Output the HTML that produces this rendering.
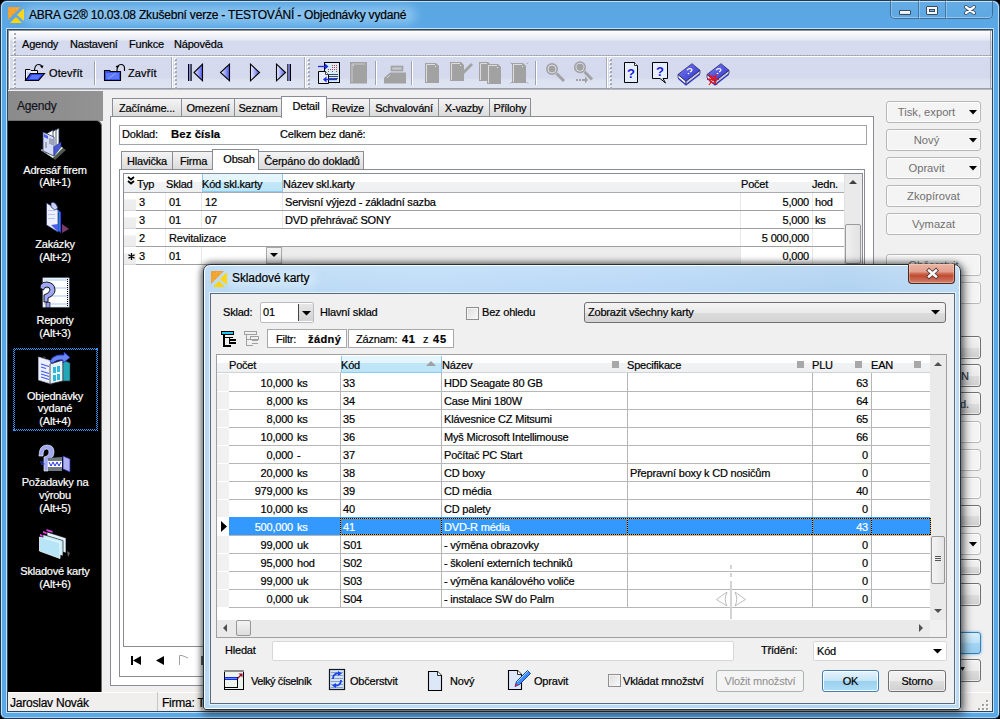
<!DOCTYPE html><html><head><meta charset="utf-8"><style>
html,body{margin:0;padding:0;width:1000px;height:719px;overflow:hidden;background:#000;}
.t{position:absolute;white-space:nowrap;letter-spacing:-0.2px;-webkit-text-stroke:0.2px currentColor;font-family:"Liberation Sans",sans-serif;line-height:normal;}
.r{position:absolute;box-sizing:border-box;}
svg.r{overflow:visible}
</style></head><body>
<div class="r" style="left:0px;top:0px;width:1000px;height:719px;background:linear-gradient(#5aa6e2,#5ba8e6 30px,#5aa8e6);border:1px solid #1f3650;border-radius:7px 7px 6px 6px;"></div>
<div class="r" style="left:1px;top:1px;width:998px;height:717px;border:1px solid #bde0fb;border-radius:6px 6px 5px 5px;border-bottom-color:#a8d2f4"></div>
<div class="r" style="left:6px;top:28px;width:988px;height:685px;border:1px solid #c2e2fb;"></div>
<div class="r" style="left:7px;top:29px;width:986px;height:683px;border:1px solid #2a4560;background:#f0f0f0;"></div>
<div class="r" style="left:890px;top:-1px;width:103px;height:20px;border:1px solid rgba(40,60,90,.55);border-top:none;border-radius:0 0 5px 5px;background:linear-gradient(rgba(255,255,255,.08),rgba(255,255,255,.02));box-shadow:inset 0 -1px 0 rgba(255,255,255,.35), inset 1px 0 0 rgba(255,255,255,.25)"></div>
<div class="r" style="left:918px;top:0px;width:1px;height:19px;background:rgba(40,60,90,.45)"></div>
<div class="r" style="left:919px;top:0px;width:1px;height:19px;background:rgba(255,255,255,.25)"></div>
<div class="r" style="left:945px;top:0px;width:1px;height:19px;background:rgba(40,60,90,.45)"></div>
<div class="r" style="left:946px;top:0px;width:1px;height:19px;background:rgba(255,255,255,.25)"></div>
<div class="r" style="left:899px;top:10px;width:12px;height:5px;background:linear-gradient(#fff,#dfe6ee);border:1px solid #3b4a5a;border-radius:1px"></div>
<div class="r" style="left:926px;top:6px;width:12px;height:9px;border:1px solid #3b4a5a;background:#f4f7fa;border-radius:1px"></div>
<div class="r" style="left:929px;top:9px;width:6px;height:3px;background:#7fb5e6;border:1px solid #3b4a5a"></div>
<svg class="r" style="left:964px;top:5px" width="12" height="10" viewBox="0 0 12 10"><path d="M2 2 L10 8 M10 2 L2 8" stroke="#3b4a5a" stroke-width="4" stroke-linecap="round"/><path d="M2 2 L10 8 M10 2 L2 8" stroke="#fafcfe" stroke-width="2.2" stroke-linecap="round"/></svg>
<svg class="r" style="left:8px;top:7px" width="17" height="17" viewBox="0 0 17 17"><polygon points="0,0 13,0 0,13" fill="#f0a030"/><polygon points="15,2 16,2 16,14 9,8" fill="#ffd400"/><polygon points="2,16 8,10 14,16" fill="#ffd400"/><g fill="#ffd040" opacity=".7"><circle cx="3" cy="3" r=".7"/><circle cx="6" cy="2" r=".7"/><circle cx="2" cy="6" r=".7"/><circle cx="5" cy="5" r=".7"/><circle cx="9" cy="2" r=".7"/><circle cx="2" cy="9" r=".7"/></g></svg>
<div class="r" style="left:24px;top:7px;width:392px;height:16px;background:rgba(200,232,255,.45);filter:blur(5px);border-radius:8px"></div>
<div class="t" style="left:29px;top:8px;font-size:12px;color:#000;font-weight:normal;letter-spacing:-0.2px">ABRA G2® 10.03.08 Zkušební verze - TESTOVÁNÍ - Objednávky vydané</div>
<div class="r" style="left:8px;top:30px;width:984px;height:25px;background:linear-gradient(#ffffff,#f7f8fc 3px,#e6e9f4 10px,#d5daee 11px,#d5daee);"></div>
<div class="r" style="left:8px;top:55px;width:984px;height:1px;background:repeating-linear-gradient(90deg,#9fa3ad 0 2px,#b8bbc4 2px 3px)"></div>
<div class="r" style="left:8px;top:56px;width:984px;height:1px;background:#fbfcfe"></div>
<div class="r" style="left:8px;top:57px;width:984px;height:31px;background:linear-gradient(#d5daee,#d4d9ed 21px,#dde2f2 23px,#dfe4f3);"></div>
<div class="r" style="left:8px;top:88px;width:984px;height:2px;background:linear-gradient(#8e929b,#c4c7ce)"></div>
<div class="r" style="left:8px;top:30px;width:984px;height:60px;border-left:1px solid #8d939c;border-top:1px solid #8d939c"></div>
<div class="r" style="left:9px;top:31px;width:982px;height:58px;border-left:1px solid #fff;border-top:1px solid #fff"></div>
<div class="r" style="left:14px;top:33px;width:2px;height:2px;background:#a9abb2;box-shadow:-1px -1px 0 #fff"></div>
<div class="r" style="left:14px;top:37px;width:2px;height:2px;background:#a9abb2;box-shadow:-1px -1px 0 #fff"></div>
<div class="r" style="left:14px;top:41px;width:2px;height:2px;background:#a9abb2;box-shadow:-1px -1px 0 #fff"></div>
<div class="r" style="left:14px;top:45px;width:2px;height:2px;background:#a9abb2;box-shadow:-1px -1px 0 #fff"></div>
<div class="r" style="left:14px;top:49px;width:2px;height:2px;background:#a9abb2;box-shadow:-1px -1px 0 #fff"></div>
<div class="r" style="left:14px;top:53px;width:2px;height:2px;background:#a9abb2;box-shadow:-1px -1px 0 #fff"></div>
<div class="r" style="left:14px;top:59px;width:2px;height:2px;background:#a9abb2;box-shadow:-1px -1px 0 #fff"></div>
<div class="r" style="left:14px;top:63px;width:2px;height:2px;background:#a9abb2;box-shadow:-1px -1px 0 #fff"></div>
<div class="r" style="left:14px;top:67px;width:2px;height:2px;background:#a9abb2;box-shadow:-1px -1px 0 #fff"></div>
<div class="r" style="left:14px;top:71px;width:2px;height:2px;background:#a9abb2;box-shadow:-1px -1px 0 #fff"></div>
<div class="r" style="left:14px;top:75px;width:2px;height:2px;background:#a9abb2;box-shadow:-1px -1px 0 #fff"></div>
<div class="r" style="left:14px;top:79px;width:2px;height:2px;background:#a9abb2;box-shadow:-1px -1px 0 #fff"></div>
<div class="r" style="left:14px;top:83px;width:2px;height:2px;background:#a9abb2;box-shadow:-1px -1px 0 #fff"></div>
<div class="r" style="left:14px;top:87px;width:2px;height:2px;background:#a9abb2;box-shadow:-1px -1px 0 #fff"></div>
<div class="t" style="left:22px;top:38px;font-size:11px;color:#000;font-weight:normal;">Agendy</div>
<div class="t" style="left:70px;top:38px;font-size:11px;color:#000;font-weight:normal;">Nastavení</div>
<div class="t" style="left:129px;top:38px;font-size:11px;color:#000;font-weight:normal;">Funkce</div>
<div class="t" style="left:174px;top:38px;font-size:11px;color:#000;font-weight:normal;">Nápověda</div>
<div class="r" style="left:94px;top:61px;width:1px;height:24px;background:#9fa3ad"></div>
<div class="r" style="left:95px;top:61px;width:1px;height:24px;background:#fff"></div>
<div class="r" style="left:171px;top:57px;width:1px;height:31px;background:#a9adb7"></div>
<div class="r" style="left:172px;top:57px;width:1px;height:31px;background:#fff"></div>
<div class="r" style="left:175px;top:59px;width:2px;height:2px;background:#a9abb2;box-shadow:-1px -1px 0 #fff"></div>
<div class="r" style="left:175px;top:63px;width:2px;height:2px;background:#a9abb2;box-shadow:-1px -1px 0 #fff"></div>
<div class="r" style="left:175px;top:67px;width:2px;height:2px;background:#a9abb2;box-shadow:-1px -1px 0 #fff"></div>
<div class="r" style="left:175px;top:71px;width:2px;height:2px;background:#a9abb2;box-shadow:-1px -1px 0 #fff"></div>
<div class="r" style="left:175px;top:75px;width:2px;height:2px;background:#a9abb2;box-shadow:-1px -1px 0 #fff"></div>
<div class="r" style="left:175px;top:79px;width:2px;height:2px;background:#a9abb2;box-shadow:-1px -1px 0 #fff"></div>
<div class="r" style="left:175px;top:83px;width:2px;height:2px;background:#a9abb2;box-shadow:-1px -1px 0 #fff"></div>
<div class="r" style="left:175px;top:87px;width:2px;height:2px;background:#a9abb2;box-shadow:-1px -1px 0 #fff"></div>
<div class="r" style="left:304px;top:57px;width:1px;height:31px;background:#a9adb7"></div>
<div class="r" style="left:305px;top:57px;width:1px;height:31px;background:#fff"></div>
<div class="r" style="left:308px;top:59px;width:2px;height:2px;background:#a9abb2;box-shadow:-1px -1px 0 #fff"></div>
<div class="r" style="left:308px;top:63px;width:2px;height:2px;background:#a9abb2;box-shadow:-1px -1px 0 #fff"></div>
<div class="r" style="left:308px;top:67px;width:2px;height:2px;background:#a9abb2;box-shadow:-1px -1px 0 #fff"></div>
<div class="r" style="left:308px;top:71px;width:2px;height:2px;background:#a9abb2;box-shadow:-1px -1px 0 #fff"></div>
<div class="r" style="left:308px;top:75px;width:2px;height:2px;background:#a9abb2;box-shadow:-1px -1px 0 #fff"></div>
<div class="r" style="left:308px;top:79px;width:2px;height:2px;background:#a9abb2;box-shadow:-1px -1px 0 #fff"></div>
<div class="r" style="left:308px;top:83px;width:2px;height:2px;background:#a9abb2;box-shadow:-1px -1px 0 #fff"></div>
<div class="r" style="left:308px;top:87px;width:2px;height:2px;background:#a9abb2;box-shadow:-1px -1px 0 #fff"></div>
<div class="r" style="left:375px;top:61px;width:1px;height:24px;background:#9fa3ad"></div>
<div class="r" style="left:376px;top:61px;width:1px;height:24px;background:#fff"></div>
<div class="r" style="left:411px;top:61px;width:1px;height:24px;background:#9fa3ad"></div>
<div class="r" style="left:412px;top:61px;width:1px;height:24px;background:#fff"></div>
<div class="r" style="left:535px;top:61px;width:1px;height:24px;background:#9fa3ad"></div>
<div class="r" style="left:536px;top:61px;width:1px;height:24px;background:#fff"></div>
<div class="r" style="left:606px;top:57px;width:1px;height:31px;background:#a9adb7"></div>
<div class="r" style="left:607px;top:57px;width:1px;height:31px;background:#fff"></div>
<div class="r" style="left:610px;top:59px;width:2px;height:2px;background:#a9abb2;box-shadow:-1px -1px 0 #fff"></div>
<div class="r" style="left:610px;top:63px;width:2px;height:2px;background:#a9abb2;box-shadow:-1px -1px 0 #fff"></div>
<div class="r" style="left:610px;top:67px;width:2px;height:2px;background:#a9abb2;box-shadow:-1px -1px 0 #fff"></div>
<div class="r" style="left:610px;top:71px;width:2px;height:2px;background:#a9abb2;box-shadow:-1px -1px 0 #fff"></div>
<div class="r" style="left:610px;top:75px;width:2px;height:2px;background:#a9abb2;box-shadow:-1px -1px 0 #fff"></div>
<div class="r" style="left:610px;top:79px;width:2px;height:2px;background:#a9abb2;box-shadow:-1px -1px 0 #fff"></div>
<div class="r" style="left:610px;top:83px;width:2px;height:2px;background:#a9abb2;box-shadow:-1px -1px 0 #fff"></div>
<div class="r" style="left:610px;top:87px;width:2px;height:2px;background:#a9abb2;box-shadow:-1px -1px 0 #fff"></div>
<div class="r" style="left:990px;top:57px;width:1px;height:31px;background:#a9adb7"></div>
<div class="r" style="left:990px;top:31px;width:1px;height:24px;background:#a9adb7"></div>
<svg class="r" style="left:24px;top:61px" width="23" height="22" viewBox="24 61 23 22"><path d="M25.5 80.5 L25.5 69.5 L30 69.5 L31 70.5 L37.5 70.5 L37.5 80.5Z" fill="#f0f0ff" stroke="#000" stroke-width="1"/><path d="M27 71 L27 78 L34 74Z" fill="#c8d0f8"/><path d="M25.5 80.5 L30.5 73.5 L44.5 73.5 L38.5 80.5Z" fill="#2a44ec" stroke="#000" stroke-width="1.1"/><path d="M29 79 L32 75 L41 75 L38 79Z" fill="#5a74f4"/><path d="M34.5 70 Q35 64.5 38.5 64.5 Q41.5 64.5 42 67" fill="none" stroke="#000" stroke-width="1.1"/><path d="M40 66 L42.3 68.5 L43.5 65.5Z" fill="#000"/></svg>
<div class="t" style="left:49px;top:67px;font-size:11px;color:#000;font-weight:normal;letter-spacing:0.1px">Otevřít</div>
<svg class="r" style="left:103px;top:61px" width="23" height="22" viewBox="103 61 23 22"><path d="M104.5 80.5 L104.5 70.5 L109.5 70.5 L110.5 71.5 L120.5 71.5 L120.5 80.5Z" fill="#3850ee" stroke="#000" stroke-width="1.1"/><path d="M106 73 L119 73 L119 79 L106 79Z" fill="#5c78f6"/><path d="M108 79 L116 73" stroke="#90a4ff" stroke-width="1"/><path d="M117 71 Q117 64.5 121 64.5 Q124.5 64.5 124.5 68.5 L124.5 71" fill="none" stroke="#000" stroke-width="1.1"/><path d="M115.5 66 L117.5 68.5 L119.5 65.5Z" fill="#000"/></svg>
<div class="t" style="left:128px;top:67px;font-size:11px;color:#000;font-weight:normal;letter-spacing:0.1px">Zavřít</div>
<svg class="r" style="left:187px;top:63px" width="18" height="19" viewBox="0 0 18 19"><defs><linearGradient id="g1" x1="0" x2="1" y1="0" y2="0"><stop offset="0" stop-color="#f4f4ff"/><stop offset="1" stop-color="#4a56e8"/></linearGradient></defs><rect x="1" y="1" width="1.2" height="17" fill="#000"/><rect x="2.2" y="1" width="1.3" height="17" fill="#7b7ef0"/><rect x="3.5" y="1" width="1.2" height="17" fill="#000"/><path d="M15.5 1.2 L7 9.5 L15.5 17.8Z" fill="url(#g1)" stroke="#000" stroke-width="1.1" stroke-linejoin="miter"/></svg>
<svg class="r" style="left:218px;top:63px" width="13" height="19" viewBox="0 0 13 19"><defs><linearGradient id="g2" x1="0" x2="1" y1="0" y2="0"><stop offset="0" stop-color="#f4f4ff"/><stop offset="1" stop-color="#4a56e8"/></linearGradient></defs><path d="M11.5 1.2 L2.5 9.5 L11.5 17.8Z" fill="url(#g2)" stroke="#000" stroke-width="1.1"/></svg>
<svg class="r" style="left:249px;top:63px" width="13" height="19" viewBox="0 0 13 19"><defs><linearGradient id="g3" x1="0" x2="1" y1="0" y2="0"><stop offset="0" stop-color="#f4f4ff"/><stop offset="1" stop-color="#4a56e8"/></linearGradient></defs><path d="M1.5 1.2 L10.5 9.5 L1.5 17.8Z" fill="url(#g3)" stroke="#000" stroke-width="1.1"/></svg>
<svg class="r" style="left:275px;top:63px" width="18" height="19" viewBox="0 0 18 19"><defs><linearGradient id="g4" x1="0" x2="1" y1="0" y2="0"><stop offset="0" stop-color="#f4f4ff"/><stop offset="1" stop-color="#4a56e8"/></linearGradient></defs><path d="M1.5 1.2 L10.5 9.5 L1.5 17.8Z" fill="url(#g4)" stroke="#000" stroke-width="1.1"/><rect x="12.3" y="1" width="1.2" height="17" fill="#000"/><rect x="13.5" y="1" width="1.3" height="17" fill="#7b7ef0"/><rect x="14.8" y="1" width="1.2" height="17" fill="#000"/></svg>
<svg class="r" style="left:317px;top:61px" width="25" height="24" viewBox="317 61 25 24"><rect x="324.5" y="62.5" width="15" height="20" fill="#d4eefc" stroke="#000"/><g fill="#c04040"><rect x="332" y="65" width="1" height="1"/><rect x="334" y="65" width="1" height="1"/><rect x="336" y="65" width="1" height="1"/><rect x="332" y="67" width="1" height="1"/><rect x="334" y="67" width="1" height="1"/><rect x="336" y="67" width="1" height="1"/><rect x="328" y="69" width="1" height="1"/><rect x="330" y="69" width="1" height="1"/><rect x="332" y="69" width="1" height="1"/><rect x="334" y="69" width="1" height="1"/><rect x="336" y="69" width="1" height="1"/><rect x="328" y="71" width="1" height="1"/><rect x="332" y="71" width="1" height="1"/><rect x="336" y="71" width="1" height="1"/></g><g fill="#405060"><rect x="329" y="74" width="9" height="1"/><rect x="329" y="76" width="9" height="1"/><rect x="329" y="78" width="9" height="1"/></g><path d="M318.5 71.5 L325.5 71.5 L328.5 74.5 L328.5 83.5 L318.5 83.5Z" fill="#e8ecfc" stroke="#000"/><path d="M325.5 71.5 L325.5 74.5 L328.5 74.5" fill="#fff" stroke="#000" stroke-width=".7"/><path d="M318 66.5 L326 66.5" stroke="#1a2ae8" stroke-width="1.3"/><path d="M325 63.5 L328.5 66.5 L325 69.5Z" fill="#1a2ae8"/><path d="M337 79.5 L325 79.5" stroke="#1a2ae8" stroke-width="1.3"/><path d="M326.5 76.5 L323 79.5 L326.5 82.5Z" fill="#1a2ae8"/></svg>
<svg class="r" style="left:349px;top:61px" width="20" height="24" viewBox="349 61 20 24"><rect x="350" y="62" width="17" height="21.5" fill="#a2a2a2"/><path d="M352 82 L352 64 L365 64" fill="none" stroke="#d0d0d0" stroke-width=".9"/><rect x="353" y="65" width="1" height="1" fill="#e0e0e0"/></svg>
<svg class="r" style="left:382px;top:64px" width="26" height="21" viewBox="382 64 26 21"><rect x="391.5" y="66.5" width="11" height="4" fill="#c8c8c8" stroke="#a2a2a2" stroke-width="1.6"/><path d="M390 72.5 L406 72.5 L406 83.5 L384 83.5 L384 78Z" fill="#a2a2a2"/><path d="M387 78 L390 75" stroke="#d0d0d0" stroke-width="1"/></svg>
<svg class="r" style="left:425px;top:63px" width="15" height="21" viewBox="0 0 15 21"><path d="M0 0 L11 0 L14 3 L14 20 L0 20Z" fill="#a2a2a2"/><path d="M1.5 19 L1.5 1.5 L10 1.5" fill="none" stroke="#dcdcdc" stroke-width="1"/><rect x="10" y="3" width="1" height="1" fill="#e8e8e8"/></svg>
<svg class="r" style="left:450px;top:62px" width="23" height="21" viewBox="0 0 23 21"><path d="M0 0 L11 0 L14 3 L14 19 L0 19Z" fill="#a2a2a2"/><path d="M1.5 18 L1.5 1.5 L10 1.5" fill="none" stroke="#dcdcdc" stroke-width="1"/><rect x="10" y="3" width="1" height="1" fill="#e8e8e8"/><path d="M13 9 L21 1 L23 3 L13 13Z" fill="#a2a2a2"/></svg>
<svg class="r" style="left:479px;top:62px" width="23" height="23" viewBox="0 0 23 23"><path d="M0 0 L9 0 L12 3 L12 19 L0 19Z" fill="#a2a2a2"/><path d="M1.5 18 L1.5 1.5 L8 1.5" fill="none" stroke="#dcdcdc" stroke-width="1"/><rect x="8" y="3" width="1" height="1" fill="#e8e8e8"/><path d="M8 2 L19 2 L22 5 L22 22 L8 22Z" fill="#a2a2a2"/><path d="M9.5 21 L9.5 3.5 L18 3.5" fill="none" stroke="#dcdcdc" stroke-width="1"/><rect x="18" y="5" width="1" height="1" fill="#e8e8e8"/></svg>
<svg class="r" style="left:510px;top:62px" width="19" height="22" viewBox="0 0 19 22"><path d="M2 1 L13 1 L16 4 L16 21 L2 21Z" fill="#a2a2a2"/><path d="M3.5 20 L3.5 2.5 L12 2.5" fill="none" stroke="#dcdcdc" stroke-width="1"/><rect x="12" y="4" width="1" height="1" fill="#e8e8e8"/><path d="M0.5 0.5 L2 2 M18 0.5 L16.5 2 M0.5 21.5 L2 20 M18 21.5 L16.5 20" stroke="#909090" stroke-width=".8"/></svg>
<svg class="r" style="left:540px;top:58px" width="30" height="30" viewBox="0 0 30 30"><circle cx="12" cy="11" r="5" fill="#a2a2a2" stroke="#a2a2a2" stroke-width="2"/><circle cx="12" cy="11" r="4" fill="none" stroke="#dadde8" stroke-width="1"/><path d="M16.5 15.5 L24 23" stroke="#a2a2a2" stroke-width="3"/></svg>
<svg class="r" style="left:568px;top:58px" width="30" height="30" viewBox="0 0 30 30"><circle cx="12" cy="9.3" r="5" fill="#a2a2a2" stroke="#a2a2a2" stroke-width="2"/><circle cx="12" cy="9.3" r="4" fill="none" stroke="#dadde8" stroke-width="1"/><path d="M16.5 13.8 L24 21.5" stroke="#a2a2a2" stroke-width="3"/><rect x="8" y="21" width="2" height="2" fill="#a2a2a2"/><rect x="11" y="21" width="2" height="2" fill="#a2a2a2"/><rect x="14" y="21" width="4" height="2" fill="#a2a2a2"/><path d="M17 18.5 L20 22 L17 25.5Z" fill="#a2a2a2"/></svg>
<svg class="r" style="left:624px;top:62px" width="15" height="22" viewBox="0 0 15 22"><path d="M0.5 0.5 L10.5 0.5 L13.5 3.5 L13.5 20.5 L0.5 20.5Z" fill="#e6eefc" stroke="#000"/><path d="M10.5 0.5 L10.5 3.5 L13.5 3.5" fill="#fff" stroke="#000" stroke-width=".8"/><text x="7" y="16" font-family="Liberation Sans" font-weight="bold" font-size="13" fill="#1a1ae6" text-anchor="middle">?</text></svg>
<svg class="r" style="left:652px;top:62px" width="17" height="23" viewBox="0 0 17 23"><path d="M0.5 0.5 L15.5 0.5 L15.5 16.5 L11 16.5 L13.5 21 L8 16.5 L0.5 16.5Z" fill="#e6eefc" stroke="#000"/><text x="8" y="13.5" font-family="Liberation Sans" font-weight="bold" font-size="13" fill="#1a1ae6" text-anchor="middle">?</text></svg>
<svg class="r" style="left:677px;top:61px" width="25" height="30" viewBox="0 0 25 30"><g transform="translate(0,1) scale(1,0.83)"><defs><linearGradient id="bk" x1="0" y1="0" x2="1" y2="1"><stop offset="0" stop-color="#7c80f4"/><stop offset="1" stop-color="#2a2ec8"/></linearGradient></defs><path d="M1 15 L9 23 L9 27 L1 19Z" fill="#f0f0f0" stroke="#202060" stroke-width=".8"/><path d="M9 23 L23 10 L23 14 L9 27Z" fill="#c8c8d8" stroke="#202060" stroke-width=".8"/><path d="M9 27 L23 14 L23 15.5 L9 28.5Z" fill="#2030d0"/><path d="M1 19 L9 27 L9 28.5 L1 20.5Z" fill="#2030d0"/><path d="M1 15 L15 2 L23 10 L9 23Z" fill="url(#bk)" stroke="#202060" stroke-width=".8"/><path d="M10 10 Q12 7 14.5 8.5 Q16 10 13 12" fill="none" stroke="#fff" stroke-width="1.3"/><circle cx="11.5" cy="14" r=".9" fill="#fff"/></g></svg>
<svg class="r" style="left:706px;top:61px" width="25" height="30" viewBox="0 0 25 30"><g transform="translate(0,1) scale(1,0.83)"><defs><linearGradient id="bk2" x1="0" y1="0" x2="1" y2="1"><stop offset="0" stop-color="#7c80f4"/><stop offset="1" stop-color="#2a2ec8"/></linearGradient></defs><path d="M1 15 L9 23 L9 27 L1 19Z" fill="#f0f0f0" stroke="#202060" stroke-width=".8"/><path d="M9 23 L23 10 L23 14 L9 27Z" fill="#c8c8d8" stroke="#202060" stroke-width=".8"/><path d="M9 27 L23 14 L23 15.5 L9 28.5Z" fill="#2030d0"/><path d="M1 19 L9 27 L9 28.5 L1 20.5Z" fill="#2030d0"/><path d="M1 15 L15 2 L23 10 L9 23Z" fill="url(#bk2)" stroke="#202060" stroke-width=".8"/><path d="M10 10 Q12 7 14.5 8.5 Q16 10 13 12" fill="none" stroke="#fff" stroke-width="1.3"/><circle cx="11.5" cy="14" r=".9" fill="#fff"/></g><path d="M3 13 L11 24 M11 13 L3 24 M1 18.5 L13 18.5" stroke="#f01010" stroke-width="1.2"/><circle cx="7" cy="18.5" r="3.5" fill="none" stroke="#f01010" stroke-width="1"/></svg>
<div class="r" style="left:8px;top:91px;width:95px;height:30px;background:linear-gradient(90deg,#8b8b8b,#8f8f8f 60%,#939393);"></div>
<div class="t" style="left:17px;top:99px;font-size:12px;color:#141420;font-weight:normal;">Agendy</div>
<div class="r" style="left:8px;top:120px;width:94px;height:573px;background:#000;border-top-right-radius:6px;border-right:1px solid #707070;border-top:1px solid #707070"></div>
<div class="t" style="left:-45px;width:200px;top:164px;font-size:11px;color:#fff;font-weight:normal;text-align:center;">Adresář firem</div>
<div class="t" style="left:-45px;width:200px;top:176px;font-size:11px;color:#fff;font-weight:normal;text-align:center;">(Alt+1)</div>
<div class="t" style="left:-45px;width:200px;top:238px;font-size:11px;color:#fff;font-weight:normal;text-align:center;">Zakázky</div>
<div class="t" style="left:-45px;width:200px;top:251px;font-size:11px;color:#fff;font-weight:normal;text-align:center;">(Alt+2)</div>
<div class="t" style="left:-45px;width:200px;top:314px;font-size:11px;color:#fff;font-weight:normal;text-align:center;">Reporty</div>
<div class="t" style="left:-45px;width:200px;top:327px;font-size:11px;color:#fff;font-weight:normal;text-align:center;">(Alt+3)</div>
<div class="t" style="left:-45px;width:200px;top:390px;font-size:11px;color:#fff;font-weight:normal;text-align:center;">Objednávky</div>
<div class="t" style="left:-45px;width:200px;top:402px;font-size:11px;color:#fff;font-weight:normal;text-align:center;">vydané</div>
<div class="t" style="left:-45px;width:200px;top:415px;font-size:11px;color:#fff;font-weight:normal;text-align:center;">(Alt+4)</div>
<div class="t" style="left:-45px;width:200px;top:476px;font-size:11px;color:#fff;font-weight:normal;text-align:center;">Požadavky na</div>
<div class="t" style="left:-45px;width:200px;top:489px;font-size:11px;color:#fff;font-weight:normal;text-align:center;">výrobu</div>
<div class="t" style="left:-45px;width:200px;top:502px;font-size:11px;color:#fff;font-weight:normal;text-align:center;">(Alt+5)</div>
<div class="t" style="left:-45px;width:200px;top:565px;font-size:11px;color:#fff;font-weight:normal;text-align:center;">Skladové karty</div>
<div class="t" style="left:-45px;width:200px;top:578px;font-size:11px;color:#fff;font-weight:normal;text-align:center;">(Alt+6)</div>
<div class="r" style="left:13px;top:348px;width:2px;height:83px;background:repeating-conic-gradient(#3399ff 0 25%,transparent 0 50%) 0 0/2px 2px"></div>
<div class="r" style="left:96px;top:348px;width:2px;height:83px;background:repeating-conic-gradient(#3399ff 0 25%,transparent 0 50%) 0 0/2px 2px"></div>
<div class="r" style="left:13px;top:348px;width:85px;height:2px;background:repeating-conic-gradient(#3399ff 0 25%,transparent 0 50%) 0 0/2px 2px"></div>
<div class="r" style="left:13px;top:429px;width:85px;height:2px;background:repeating-conic-gradient(#3399ff 0 25%,transparent 0 50%) 0 0/2px 2px"></div>
<svg class="r" style="left:36px;top:124px" width="34" height="38" viewBox="36 124 34 38"><path d="M41 150 L53 158 L63 148 L58 145 Z" fill="#e6f2dc" stroke="#c8d8c0" stroke-width=".6"/><path d="M53 158 L63 148 L66 150 L55 160Z" fill="#505850"/><path d="M50 134 L59 128 L59 146 L50 152Z" fill="#fff" stroke="#203050" stroke-width=".8"/><path d="M48 134 L56 129.5 L56 148 L48 153Z" fill="#fff" stroke="#203050" stroke-width=".8"/><path d="M46 134 L53 130 L53 149 L46 153Z" fill="#fff" stroke="#203050" stroke-width=".8"/><path d="M43 132 L54 137 L54 156 L43 151Z" fill="#d4dcfa" stroke="#304070" stroke-width=".8"/><path d="M44 134 L48 136 L48 139 L44 137Z" fill="#5060f0"/><path d="M50 138 L50 144 M52 139 L52 145 M46 142 L46 148" stroke="#606070" stroke-width=".9"/><path d="M54 147 L61 142 L61 147 L54 156Z" fill="#4a5ad8" stroke="#203080" stroke-width=".6"/></svg>
<svg class="r" style="left:44px;top:200px" width="28" height="36" viewBox="44 200 28 36"><path d="M62 224 L69 229 L62 233Z" fill="#7a3a6a"/><path d="M58 210 L61 212 L61 233 L58 231Z" fill="#3a3af0"/><path d="M58 210 L58 212 L59 212 L59 231" stroke="#20c0f0" stroke-width="1"/><path d="M46.5 203 L58 210 L58 232 L46.5 225Z" fill="#eef0fe" stroke="#203070" stroke-width=".7"/><g fill="#b8c4f4"><rect x="48" y="210" width="7" height="1"/><rect x="48" y="214" width="7" height="1"/><rect x="48" y="218" width="7" height="1"/></g><path d="M51 203 Q53 201 56 204 L58 208 L55 210 L51 207Z" fill="#c8d0f8" stroke="#203070" stroke-width=".7"/><path d="M51 225 L58 224 L58 232Z" fill="#4a60e8"/></svg>
<svg class="r" style="left:36px;top:274px" width="36" height="38" viewBox="36 274 36 38"><rect x="43" y="278" width="26" height="29" fill="#fff" stroke="#c8dcf4" stroke-width=".8"/><g fill="#d2e4f8"><rect x="44" y="279" width="24" height="2"/><rect x="44" y="287" width="24" height="2"/><rect x="44" y="295" width="24" height="2"/><rect x="44" y="303" width="24" height="2"/></g><path d="M67.5 279 L67.5 307" stroke="#000" stroke-width="1" stroke-dasharray="1 1"/><path d="M40 288 Q40 282 47 282 Q55 283 55 290 Q55 295 48 298 L48 302 L44 302 L44 295 Q50 293 50 290 Q50 287 47 287 Q44 287 43.5 290Z" fill="#a0a8f4" stroke="#000" stroke-width=".9"/><rect x="46" y="302.5" width="4" height="5" fill="#9098f0" stroke="#000" stroke-width=".6"/></svg>
<svg class="r" style="left:36px;top:350px" width="36" height="36" viewBox="36 350 36 36"><path d="M38.5 357 L51.5 361 L51.5 384 L38.5 380Z" fill="#eef0fc" stroke="#b0b8d0" stroke-width=".7"/><path d="M42 358 Q44 355.5 46 358" fill="none" stroke="#404050" stroke-width="1"/><g stroke="#3a5af0" stroke-width="1.1"><path d="M41 364 L49 366.5 M41 367 L46 368.5 M41 371 L49 373.5 M41 374 L49 376.5 M41 377 L49 379.5"/></g><path d="M50 364 L63 360 L63 381 L50 384Z" fill="#e8f4f4" stroke="#303040" stroke-width=".8"/><path d="M63 360 L70 363 L70 381 L63 381Z" fill="#20a8b8" stroke="#303040" stroke-width=".6"/><g fill="#30b8d8"><rect x="53" y="367" width="3" height="6"/><rect x="57" y="366" width="3" height="6"/><rect x="53" y="375" width="3" height="6"/><rect x="57" y="374" width="3" height="6"/></g><path d="M50 362 L52 358 Q57 354 64 355 L64 352 L70 357.5 L63 363 L63 360 Q57 359 53 363Z" fill="#6a86f4" stroke="#1a30c0" stroke-width=".8"/></svg>
<svg class="r" style="left:36px;top:442px" width="36" height="34" viewBox="36 442 36 34"><path d="M39 456 Q39 445 47 445 Q54 445 54 452 Q54 458 48 460 L48 471 L44 471 L44 457 Q49 456 49 452 Q49 449 46.5 449 Q43 449 43 456Z" fill="#a0a8f4" stroke="#fff" stroke-width=".6"/><path d="M48 458 L62 457 L62 471 L48 471Z" fill="#707880"/><path d="M48 461 L62 461 L62 467 L48 467Z" fill="#fff"/><path d="M49 462 L51 466 L53 462 L55 466 L57 462 L59 466 L61 462" fill="none" stroke="#2030e0" stroke-width="1"/><path d="M63 456 L70 459 L70 472 L63 469Z" fill="#b0b0f4" stroke="#2030a0" stroke-width=".8"/><path d="M40 462 L44 462 M41 464 L45 464" stroke="#3050ff" stroke-width=".9"/></svg>
<svg class="r" style="left:36px;top:526px" width="36" height="36" viewBox="36 526 36 36"><path d="M46.5 529 L52.5 531 L52.5 533 L46.5 531Z" fill="#e040e0"/><path d="M43 531 L49 533 L49 535 L43 533Z" fill="#e040e0"/><path d="M40 534 L46 536 L46 538 L40 536Z" fill="#e040e0"/><path d="M47 532 L66 538 L66 553 L47 547Z" fill="#e4f4fc" stroke="#000" stroke-width=".6"/><path d="M43 534.5 L63 540.5 L63 556 L43 550Z" fill="#c8ecfa" stroke="#000" stroke-width=".6"/><path d="M39.5 537 L60 542.5 L60 558.5 L39.5 551Z" fill="#b8e4f8" stroke="#f4fcff" stroke-width=".8"/><path d="M67 551 L70 553 L68 557Z" fill="#606860"/></svg>
<div class="r" style="left:112px;top:98px;width:70px;height:19px;background:linear-gradient(#f4f4f4,#e6e6e6 55%,#d9d9d9);border:1px solid #8a8d95;border-bottom:none"></div>
<div class="t" style="left:47.0px;width:200px;top:102px;font-size:11px;color:#000;font-weight:normal;text-align:center;">Začínáme...</div>
<div class="r" style="left:181px;top:98px;width:54px;height:19px;background:linear-gradient(#f4f4f4,#e6e6e6 55%,#d9d9d9);border:1px solid #8a8d95;border-bottom:none"></div>
<div class="t" style="left:108.0px;width:200px;top:102px;font-size:11px;color:#000;font-weight:normal;text-align:center;">Omezení</div>
<div class="r" style="left:234px;top:98px;width:48px;height:19px;background:linear-gradient(#f4f4f4,#e6e6e6 55%,#d9d9d9);border:1px solid #8a8d95;border-bottom:none"></div>
<div class="t" style="left:158.0px;width:200px;top:102px;font-size:11px;color:#000;font-weight:normal;text-align:center;">Seznam</div>
<div class="r" style="left:326px;top:98px;width:44px;height:19px;background:linear-gradient(#f4f4f4,#e6e6e6 55%,#d9d9d9);border:1px solid #8a8d95;border-bottom:none"></div>
<div class="t" style="left:248.0px;width:200px;top:102px;font-size:11px;color:#000;font-weight:normal;text-align:center;">Revize</div>
<div class="r" style="left:369px;top:98px;width:70px;height:19px;background:linear-gradient(#f4f4f4,#e6e6e6 55%,#d9d9d9);border:1px solid #8a8d95;border-bottom:none"></div>
<div class="t" style="left:304.0px;width:200px;top:102px;font-size:11px;color:#000;font-weight:normal;text-align:center;">Schvalování</div>
<div class="r" style="left:438px;top:98px;width:52px;height:19px;background:linear-gradient(#f4f4f4,#e6e6e6 55%,#d9d9d9);border:1px solid #8a8d95;border-bottom:none"></div>
<div class="t" style="left:364.0px;width:200px;top:102px;font-size:11px;color:#000;font-weight:normal;text-align:center;">X-vazby</div>
<div class="r" style="left:489px;top:98px;width:42px;height:19px;background:linear-gradient(#f4f4f4,#e6e6e6 55%,#d9d9d9);border:1px solid #8a8d95;border-bottom:none"></div>
<div class="t" style="left:410.0px;width:200px;top:102px;font-size:11px;color:#000;font-weight:normal;text-align:center;">Přílohy</div>
<div class="r" style="left:110px;top:116px;width:764px;height:570px;background:#fff;border:1px solid #898c95"></div>
<div class="r" style="left:281px;top:96px;width:46px;height:22px;background:#fff;border:1px solid #898c95;border-bottom:none"></div>
<div class="t" style="left:206px;width:200px;top:100px;font-size:11px;color:#000;font-weight:normal;text-align:center;">Detail</div>
<div class="r" style="left:119px;top:125px;width:748px;height:20px;background:#fff;border:1px solid #a0a3aa"></div>
<div class="t" style="left:122px;top:128px;font-size:11px;color:#000;font-weight:normal;">Doklad:</div>
<div class="t" style="left:171px;top:128px;font-size:11.3px;color:#000;font-weight:bold;letter-spacing:0.1px">Bez čísla</div>
<div class="t" style="left:280px;top:128px;font-size:11px;color:#000;font-weight:normal;">Celkem bez daně:</div>
<div class="r" style="left:121px;top:151px;width:52px;height:19px;background:linear-gradient(#f4f4f4,#e6e6e6 55%,#d9d9d9);border:1px solid #8a8d95;border-bottom:none"></div>
<div class="t" style="left:47.0px;width:200px;top:155px;font-size:11px;color:#000;font-weight:normal;text-align:center;">Hlavička</div>
<div class="r" style="left:172px;top:151px;width:41px;height:19px;background:linear-gradient(#f4f4f4,#e6e6e6 55%,#d9d9d9);border:1px solid #8a8d95;border-bottom:none"></div>
<div class="t" style="left:93.5px;width:200px;top:155px;font-size:11px;color:#000;font-weight:normal;text-align:center;">Firma</div>
<div class="r" style="left:258px;top:151px;width:106px;height:19px;background:linear-gradient(#f4f4f4,#e6e6e6 55%,#d9d9d9);border:1px solid #8a8d95;border-bottom:none"></div>
<div class="t" style="left:212.0px;width:200px;top:155px;font-size:11px;color:#000;font-weight:normal;text-align:center;">Čerpáno do dokladů</div>
<div class="r" style="left:119px;top:169px;width:746px;height:508px;background:#fff;border:1px solid #898c95"></div>
<div class="r" style="left:212px;top:149px;width:47px;height:21px;background:#fff;border:1px solid #898c95;border-bottom:none"></div>
<div class="t" style="left:139px;width:200px;top:153px;font-size:11px;color:#000;font-weight:normal;text-align:center;">Obsah</div>
<div class="r" style="left:123px;top:173px;width:740px;height:474px;background:#fff;border:1px solid #898c95"></div>
<div class="r" style="left:124px;top:174px;width:720px;height:18px;background:linear-gradient(#fff 0,#fff 8px,#f1f2f4 8px,#eef0f2)"></div>
<div class="r" style="left:124px;top:192px;width:720px;height:1px;background:#a9abb1"></div>
<div class="r" style="left:202px;top:174px;width:81px;height:18px;background:linear-gradient(#e6f6fd 0,#e2f4fc 8px,#c2e7f8 8px,#bce4f8);border:1px solid #8ccaf0;border-top:none"></div>
<svg class="r" style="left:127px;top:176px" width="8" height="9" viewBox="0 0 8 9"><path d="M1 1 L4 3.5 L7 1 M1 5 L4 7.5 L7 5" fill="none" stroke="#000" stroke-width="1.8"/></svg>
<div class="t" style="left:137px;top:178px;font-size:11px;color:#000;font-weight:normal;">Typ</div>
<div class="t" style="left:166px;top:178px;font-size:11px;color:#000;font-weight:normal;">Sklad</div>
<div class="t" style="left:202px;top:178px;font-size:11px;color:#000;font-weight:normal;">Kód skl.karty</div>
<div class="t" style="left:283px;top:178px;font-size:11px;color:#000;font-weight:normal;">Název skl.karty</div>
<div class="t" style="left:741px;top:178px;font-size:11px;color:#000;font-weight:normal;">Počet</div>
<div class="t" style="left:812px;top:178px;font-size:11px;color:#000;font-weight:normal;">Jedn.</div>
<div class="r" style="left:844px;top:174px;width:18px;height:472px;background:#eaeaea;border-left:1px solid #e0e0e0"></div>
<svg class="r" style="left:849px;top:180px" width="8" height="5" viewBox="0 0 8 5"><path d="M0 4 L4 0 L8 4Z" fill="#404040"/></svg>
<div class="r" style="left:845px;top:224px;width:16px;height:40px;background:linear-gradient(90deg,#f0f0f0,#e2e2e2);border:1px solid #9a9a9a;border-radius:2px"></div>
<div class="r" style="left:124px;top:193px;width:12px;height:17px;background:linear-gradient(#fff,#fff 35%,#efefef 40%,#ececec)"></div>
<div class="r" style="left:124px;top:210px;width:12px;height:1px;background:#d8d8d8"></div>
<div class="r" style="left:136px;top:210px;width:708px;height:1px;background:#a0a0a0"></div>
<div class="r" style="left:165px;top:193px;width:1px;height:17px;background:#ececec"></div>
<div class="r" style="left:201px;top:193px;width:1px;height:17px;background:#e8e8e8"></div>
<div class="r" style="left:282px;top:193px;width:1px;height:17px;background:#e8e8e8"></div>
<div class="r" style="left:740px;top:193px;width:1px;height:17px;background:#e8e8e8"></div>
<div class="r" style="left:812px;top:193px;width:1px;height:17px;background:#e8e8e8"></div>
<div class="t" style="left:139px;top:196px;font-size:11px;color:#000;font-weight:normal;">3</div>
<div class="t" style="left:169px;top:196px;font-size:11px;color:#000;font-weight:normal;">01</div>
<div class="t" style="left:205px;top:196px;font-size:11px;color:#000;font-weight:normal;">12</div>
<div class="t" style="left:285px;top:196px;font-size:11px;color:#000;font-weight:normal;">Servisní výjezd - základní sazba</div>
<div class="t" style="right:191px;top:196px;font-size:11px;color:#000;font-weight:normal;text-align:right;">5,000</div>
<div class="t" style="left:815px;top:196px;font-size:11px;color:#000;font-weight:normal;">hod</div>
<div class="r" style="left:124px;top:211px;width:12px;height:17px;background:linear-gradient(#fff,#fff 35%,#efefef 40%,#ececec)"></div>
<div class="r" style="left:124px;top:228px;width:12px;height:1px;background:#d8d8d8"></div>
<div class="r" style="left:136px;top:228px;width:708px;height:1px;background:#a0a0a0"></div>
<div class="r" style="left:165px;top:211px;width:1px;height:17px;background:#ececec"></div>
<div class="r" style="left:201px;top:211px;width:1px;height:17px;background:#e8e8e8"></div>
<div class="r" style="left:282px;top:211px;width:1px;height:17px;background:#e8e8e8"></div>
<div class="r" style="left:740px;top:211px;width:1px;height:17px;background:#e8e8e8"></div>
<div class="r" style="left:812px;top:211px;width:1px;height:17px;background:#e8e8e8"></div>
<div class="t" style="left:139px;top:214px;font-size:11px;color:#000;font-weight:normal;">3</div>
<div class="t" style="left:169px;top:214px;font-size:11px;color:#000;font-weight:normal;">01</div>
<div class="t" style="left:205px;top:214px;font-size:11px;color:#000;font-weight:normal;">07</div>
<div class="t" style="left:285px;top:214px;font-size:11px;color:#000;font-weight:normal;">DVD přehrávač SONY</div>
<div class="t" style="right:191px;top:214px;font-size:11px;color:#000;font-weight:normal;text-align:right;">5,000</div>
<div class="t" style="left:815px;top:214px;font-size:11px;color:#000;font-weight:normal;">ks</div>
<div class="r" style="left:124px;top:229px;width:12px;height:17px;background:linear-gradient(#fff,#fff 35%,#efefef 40%,#ececec)"></div>
<div class="r" style="left:124px;top:246px;width:12px;height:1px;background:#d8d8d8"></div>
<div class="r" style="left:136px;top:246px;width:708px;height:1px;background:#a0a0a0"></div>
<div class="r" style="left:165px;top:229px;width:1px;height:17px;background:#ececec"></div>
<div class="r" style="left:740px;top:229px;width:1px;height:17px;background:#e8e8e8"></div>
<div class="r" style="left:812px;top:229px;width:1px;height:17px;background:#e8e8e8"></div>
<div class="t" style="left:139px;top:232px;font-size:11px;color:#000;font-weight:normal;">2</div>
<div class="t" style="left:169px;top:232px;font-size:11px;color:#000;font-weight:normal;">Revitalizace</div>
<div class="t" style="left:205px;top:232px;font-size:11px;color:#000;font-weight:normal;"></div>
<div class="t" style="left:285px;top:232px;font-size:11px;color:#000;font-weight:normal;"></div>
<div class="t" style="right:191px;top:232px;font-size:11px;color:#000;font-weight:normal;text-align:right;">5 000,000</div>
<div class="t" style="left:815px;top:232px;font-size:11px;color:#000;font-weight:normal;"></div>
<div class="r" style="left:124px;top:247px;width:12px;height:17px;background:linear-gradient(#fff,#fff 35%,#efefef 40%,#ececec)"></div>
<div class="r" style="left:124px;top:264px;width:12px;height:1px;background:#d8d8d8"></div>
<div class="r" style="left:136px;top:264px;width:708px;height:1px;background:#a0a0a0"></div>
<div class="r" style="left:165px;top:247px;width:1px;height:17px;background:#ececec"></div>
<div class="r" style="left:201px;top:247px;width:1px;height:17px;background:#e8e8e8"></div>
<div class="r" style="left:282px;top:247px;width:1px;height:17px;background:#e8e8e8"></div>
<div class="r" style="left:740px;top:247px;width:1px;height:17px;background:#e8e8e8"></div>
<div class="r" style="left:812px;top:247px;width:1px;height:17px;background:#e8e8e8"></div>
<div class="t" style="left:139px;top:250px;font-size:11px;color:#000;font-weight:normal;">3</div>
<div class="t" style="left:169px;top:250px;font-size:11px;color:#000;font-weight:normal;">01</div>
<div class="t" style="left:205px;top:250px;font-size:11px;color:#000;font-weight:normal;"></div>
<div class="t" style="left:285px;top:250px;font-size:11px;color:#000;font-weight:normal;"></div>
<div class="t" style="right:191px;top:250px;font-size:11px;color:#000;font-weight:normal;text-align:right;">0,000</div>
<div class="t" style="left:815px;top:250px;font-size:11px;color:#000;font-weight:normal;"></div>
<div class="r" style="left:283px;top:247px;width:457px;height:17px;background:#ececec"></div>
<svg class="r" style="left:128px;top:253px" width="7" height="7" viewBox="0 0 7 7"><path d="M3.5 0 V7 M0.4 1.7 L6.6 5.3 M0.4 5.3 L6.6 1.7" stroke="#000" stroke-width="1.3"/></svg>
<div class="r" style="left:266px;top:247px;width:16px;height:17px;background:linear-gradient(#f3f3f3,#dcdcdc);border:1px solid #a8a8a8"></div>
<svg class="r" style="left:270px;top:253px" width="8" height="5" viewBox="0 0 8 5"><path d="M0 0 L8 0 L4 4Z" fill="#000"/></svg>
<svg class="r" style="left:131px;top:656px" width="11" height="9" viewBox="0 0 11 9"><rect x="0" y="0" width="2" height="9" fill="#000"/><path d="M10 0 L2 4.5 L10 9Z" fill="#000"/></svg>
<svg class="r" style="left:156px;top:656px" width="9" height="9" viewBox="0 0 9 9"><path d="M8 0 L0 4.5 L8 9Z" fill="#000"/></svg>
<div class="r" style="left:201px;top:656px;width:2px;height:9px;background:#606060"></div>
<svg class="r" style="left:179px;top:655px" width="10" height="10" viewBox="0 0 10 10"><path d="M0.5 10 L0.5 0.5 L3 0.5 L9 3" fill="none" stroke="#a0a0a0" stroke-width="1"/></svg>
<div class="r" style="left:886px;top:101px;width:95px;height:22px;background:#f4f4f4;border:1px solid #b7b7b7;border-radius:3px;box-shadow:inset 0 0 0 1px #fcfcfc;"></div>
<div class="t" style="left:826.5px;width:200px;top:106px;font-size:11.2px;color:#707070;font-weight:normal;text-align:center;letter-spacing:0;-webkit-text-stroke:0">Tisk, export</div>
<svg class="r" style="left:969px;top:110px" width="8" height="5" viewBox="0 0 8 5"><path d="M0 0 L8 0 L4 4.5Z" fill="#000"/></svg>
<div class="r" style="left:886px;top:129px;width:95px;height:22px;background:#f4f4f4;border:1px solid #b7b7b7;border-radius:3px;box-shadow:inset 0 0 0 1px #fcfcfc;"></div>
<div class="t" style="left:826.5px;width:200px;top:134px;font-size:11.2px;color:#707070;font-weight:normal;text-align:center;letter-spacing:0;-webkit-text-stroke:0">Nový</div>
<svg class="r" style="left:969px;top:138px" width="8" height="5" viewBox="0 0 8 5"><path d="M0 0 L8 0 L4 4.5Z" fill="#000"/></svg>
<div class="r" style="left:886px;top:157px;width:95px;height:22px;background:#f4f4f4;border:1px solid #b7b7b7;border-radius:3px;box-shadow:inset 0 0 0 1px #fcfcfc;"></div>
<div class="t" style="left:826.5px;width:200px;top:162px;font-size:11.2px;color:#707070;font-weight:normal;text-align:center;letter-spacing:0;-webkit-text-stroke:0">Opravit</div>
<svg class="r" style="left:969px;top:166px" width="8" height="5" viewBox="0 0 8 5"><path d="M0 0 L8 0 L4 4.5Z" fill="#000"/></svg>
<div class="r" style="left:886px;top:185px;width:95px;height:22px;background:#f4f4f4;border:1px solid #b7b7b7;border-radius:3px;box-shadow:inset 0 0 0 1px #fcfcfc;"></div>
<div class="t" style="left:833.5px;width:200px;top:190px;font-size:11.2px;color:#707070;font-weight:normal;text-align:center;letter-spacing:0;-webkit-text-stroke:0">Zkopírovat</div>
<div class="r" style="left:886px;top:213px;width:95px;height:22px;background:#f4f4f4;border:1px solid #b7b7b7;border-radius:3px;box-shadow:inset 0 0 0 1px #fcfcfc;"></div>
<div class="t" style="left:833.5px;width:200px;top:218px;font-size:11.2px;color:#707070;font-weight:normal;text-align:center;letter-spacing:0;-webkit-text-stroke:0">Vymazat</div>
<div class="r" style="left:886px;top:254px;width:95px;height:22px;background:#f4f4f4;border:1px solid #b7b7b7;border-radius:3px;box-shadow:inset 0 0 0 1px #fcfcfc;"></div>
<div class="t" style="left:833.5px;width:200px;top:259px;font-size:11.2px;color:#707070;font-weight:normal;text-align:center;letter-spacing:0;-webkit-text-stroke:0">Občerstvit</div>
<div class="r" style="left:886px;top:282px;width:95px;height:22px;background:#f4f4f4;border:1px solid #b7b7b7;border-radius:3px;box-shadow:inset 0 0 0 1px #fcfcfc;"></div>
<div class="r" style="left:886px;top:336px;width:95px;height:23px;background:linear-gradient(#f2f2f2,#ebebeb 50%,#dddddd 51%,#cfcfcf);border:1px solid #707070;border-radius:3px;box-shadow:inset 0 0 0 1px rgba(255,255,255,.6);"></div>
<div class="r" style="left:886px;top:364px;width:95px;height:23px;background:linear-gradient(#f2f2f2,#ebebeb 50%,#dddddd 51%,#cfcfcf);border:1px solid #707070;border-radius:3px;box-shadow:inset 0 0 0 1px rgba(255,255,255,.6);"></div>
<div class="r" style="left:886px;top:392px;width:95px;height:23px;background:linear-gradient(#f2f2f2,#ebebeb 50%,#dddddd 51%,#cfcfcf);border:1px solid #707070;border-radius:3px;box-shadow:inset 0 0 0 1px rgba(255,255,255,.6);"></div>
<div class="t" style="left:961px;top:370px;font-size:11px;color:#303848;font-weight:normal;">N</div>
<div class="t" style="left:960px;top:398px;font-size:11px;color:#303848;font-weight:normal;">d.</div>
<div class="r" style="left:886px;top:421px;width:95px;height:22px;background:#f4f4f4;border:1px solid #b7b7b7;border-radius:3px;box-shadow:inset 0 0 0 1px #fcfcfc;"></div>
<div class="r" style="left:886px;top:449px;width:95px;height:22px;background:#f4f4f4;border:1px solid #b7b7b7;border-radius:3px;box-shadow:inset 0 0 0 1px #fcfcfc;"></div>
<div class="r" style="left:886px;top:477px;width:95px;height:22px;background:#f4f4f4;border:1px solid #b7b7b7;border-radius:3px;box-shadow:inset 0 0 0 1px #fcfcfc;"></div>
<div class="r" style="left:886px;top:505px;width:95px;height:22px;background:linear-gradient(#f2f2f2,#ebebeb 50%,#dddddd 51%,#cfcfcf);border:1px solid #707070;border-radius:3px;box-shadow:inset 0 0 0 1px rgba(255,255,255,.6);"></div>
<div class="r" style="left:886px;top:533px;width:95px;height:22px;background:#f4f4f4;border:1px solid #b7b7b7;border-radius:3px;box-shadow:inset 0 0 0 1px #fcfcfc;"></div>
<svg class="r" style="left:969px;top:542px" width="8" height="5" viewBox="0 0 8 5"><path d="M0 0 L8 0 L4 4.5Z" fill="#000"/></svg>
<div class="r" style="left:886px;top:559px;width:95px;height:16px;background:linear-gradient(#f2f2f2,#ebebeb 50%,#dddddd 51%,#cfcfcf);border:1px solid #707070;border-radius:3px;box-shadow:inset 0 0 0 1px rgba(255,255,255,.6);"></div>
<div class="r" style="left:886px;top:583px;width:95px;height:23px;background:linear-gradient(#f2f2f2,#ebebeb 50%,#dddddd 51%,#cfcfcf);border:1px solid #707070;border-radius:3px;box-shadow:inset 0 0 0 1px rgba(255,255,255,.6);"></div>
<div class="r" style="left:886px;top:632px;width:95px;height:22px;background:linear-gradient(#d8effb,#b9e1f8 50%,#a4d5f4 51%,#98cdf0);border:1px solid #3c7fb1;border-radius:3px;box-shadow:0 0 3px #5ab0ef"></div>
<div class="r" style="left:886px;top:659px;width:95px;height:23px;background:linear-gradient(#f2f2f2,#ebebeb 50%,#dddddd 51%,#cfcfcf);border:1px solid #707070;border-radius:3px;box-shadow:inset 0 0 0 1px rgba(255,255,255,.6);"></div>
<svg class="r" style="left:960px;top:667px" width="5" height="5" viewBox="0 0 5 5"><path d="M0 0 L5 0 L2.5 4Z" fill="#202020"/></svg>
<div class="r" style="left:8px;top:692px;width:984px;height:19px;background:#f1eeee;border-top:1px solid #fdfdfd"></div>
<div class="r" style="left:157px;top:692px;width:1px;height:19px;background:#c8c6c0"></div>
<div class="t" style="left:10px;top:696px;font-size:12px;color:#000;font-weight:normal;letter-spacing:-0.23px">Jaroslav Novák</div>
<div class="t" style="left:162px;top:696px;font-size:12px;color:#000;font-weight:normal;letter-spacing:-0.23px">Firma: T</div>
<div class="r" style="left:986px;top:708px;width:2px;height:2px;background:#a0a0a0;box-shadow:1px 1px 0 #fff"></div>
<div class="r" style="left:982px;top:708px;width:2px;height:2px;background:#a0a0a0;box-shadow:1px 1px 0 #fff"></div>
<div class="r" style="left:986px;top:704px;width:2px;height:2px;background:#a0a0a0;box-shadow:1px 1px 0 #fff"></div>
<div class="r" style="left:978px;top:708px;width:2px;height:2px;background:#a0a0a0;box-shadow:1px 1px 0 #fff"></div>
<div class="r" style="left:982px;top:704px;width:2px;height:2px;background:#a0a0a0;box-shadow:1px 1px 0 #fff"></div>
<div class="r" style="left:986px;top:700px;width:2px;height:2px;background:#a0a0a0;box-shadow:1px 1px 0 #fff"></div>
<div class="r" style="left:203px;top:264px;width:758px;height:446px;border-radius:7px 7px 2px 2px;box-shadow:2px 3px 9px 2px rgba(0,0,0,.45),-2px 1px 6px rgba(0,0,0,.25),0 -2px 6px rgba(0,0,0,.3)"></div>
<div class="r" style="left:203px;top:264px;width:758px;height:446px;background:linear-gradient(90deg,#b8d8f4,#bedcf8 30%,#b8d8f6 60%,#b0d2f0 85%,#bcdaf4);border:1px solid #22303c;border-radius:7px 7px 3px 3px;box-shadow:inset 0 0 0 1px #fbfdff"></div>
<div class="r" style="left:204px;top:265px;width:756px;height:28px;background:linear-gradient(rgba(255,255,255,.15),rgba(255,255,255,0));border-radius:6px 6px 0 0"></div>
<svg class="r" style="left:211px;top:271px" width="17" height="17" viewBox="0 0 17 17"><polygon points="0,0 13,0 0,13" fill="#f0a030"/><polygon points="15,2 16,2 16,14 9,8" fill="#ffd400"/><polygon points="2,16 8,10 14,16" fill="#ffd400"/><g fill="#ffd040" opacity=".7"><circle cx="3" cy="3" r=".7"/><circle cx="6" cy="2" r=".7"/><circle cx="2" cy="6" r=".7"/><circle cx="5" cy="5" r=".7"/><circle cx="9" cy="2" r=".7"/><circle cx="2" cy="9" r=".7"/></g></svg>
<div class="r" style="left:228px;top:271px;width:88px;height:16px;background:rgba(235,248,255,.45);filter:blur(5px);border-radius:8px"></div>
<div class="t" style="left:232px;top:271px;font-size:12px;color:#000;font-weight:normal;letter-spacing:-0.1px">Skladové karty</div>
<div class="r" style="left:908px;top:264px;width:47px;height:20px;background:linear-gradient(#ecb4a4,#e2a08e 40%,#cf6c56 50%,#c04a30 62%,#d08270);border:1px solid #4a2a20;border-top:none;border-radius:0 0 4px 4px;box-shadow:inset 0 0 0 1px rgba(255,220,200,.4)"></div>
<svg class="r" style="left:926px;top:268px" width="13" height="11" viewBox="0 0 13 11"><path d="M3 2.5 L10 8.5 M10 2.5 L3 8.5" stroke="#5a3a3a" stroke-width="4.2" stroke-linecap="square"/><path d="M3 2.5 L10 8.5 M10 2.5 L3 8.5" stroke="#fafafa" stroke-width="2.4" stroke-linecap="square"/></svg>
<div class="r" style="left:209px;top:292px;width:747px;height:413px;border:1px solid #e2f4ff"></div>
<div class="r" style="left:210px;top:293px;width:745px;height:411px;background:#f0f0f0;border:1px solid #5a6a7a"></div>
<div class="t" style="left:223px;top:306px;font-size:11px;color:#000;font-weight:normal;">Sklad:</div>
<div class="r" style="left:260px;top:302px;width:54px;height:21px;background:#fff;border:1px solid #b9bcc2;border-radius:2px"></div>
<div class="r" style="left:298px;top:304px;width:1px;height:17px;background:#444"></div>
<div class="r" style="left:299px;top:304px;width:14px;height:17px;background:linear-gradient(#e6e6e6,#d2d2d2)"></div>
<svg class="r" style="left:302px;top:311px" width="9" height="5" viewBox="0 0 9 5"><path d="M0 0 L9 0 L4.5 4.5Z" fill="#000"/></svg>
<div class="t" style="left:263px;top:306px;font-size:11px;color:#000;font-weight:normal;">01</div>
<div class="t" style="left:320px;top:306px;font-size:11px;color:#000;font-weight:normal;">Hlavní sklad</div>
<div class="r" style="left:466px;top:307px;width:13px;height:13px;background:linear-gradient(135deg,#dcdcdc,#fafafa);border:1px solid #8f8f8f;box-shadow:inset 0 0 0 1px #f4f4f4"></div>
<div class="t" style="left:482px;top:306px;font-size:11px;color:#000;font-weight:normal;">Bez ohledu</div>
<div class="r" style="left:584px;top:302px;width:362px;height:21px;background:linear-gradient(#f4f4f4,#eaeaea 50%,#dcdcdc 51%,#d4d4d4);border:1px solid #707070;border-radius:3px"></div>
<div class="t" style="left:588px;top:306px;font-size:11px;color:#000;font-weight:normal;">Zobrazit všechny karty</div>
<svg class="r" style="left:931px;top:310px" width="9" height="5" viewBox="0 0 9 5"><path d="M0 0 L9 0 L4.5 4.5Z" fill="#000"/></svg>
<svg class="r" style="left:220px;top:330px" width="18" height="18" viewBox="220 330 18 18"><g shape-rendering="crispEdges"><rect x="221" y="331" width="13" height="4" fill="#000"/><rect x="222" y="332" width="11" height="2" fill="#20c8f0"/><rect x="223" y="335" width="2" height="11" fill="#000"/><rect x="225" y="337" width="8" height="1" fill="#000"/><rect x="229" y="338" width="1" height="6" fill="#000"/><rect x="229" y="339" width="7" height="2" fill="#000"/><rect x="229" y="342" width="7" height="2" fill="#000"/><rect x="223" y="345" width="8" height="1.5" fill="#000"/></g></svg>
<svg class="r" style="left:243px;top:330px" width="18" height="18" viewBox="243 330 18 18"><g shape-rendering="crispEdges" fill="none" stroke="#a0a0a0" stroke-width="1"><rect x="244.5" y="331.5" width="12" height="3"/><path d="M246.5 335 V345.5 H253 M246.5 339.5 H250"/><rect x="250.5" y="336.5" width="8" height="2.5"/><path d="M252 340.5 H258 M252 343.5 H258"/></g></svg>
<div class="r" style="left:267px;top:329px;width:80px;height:19px;background:#fff;border:1px solid #a8a8a8"></div>
<div class="t" style="left:276px;top:333px;font-size:11px;color:#000;font-weight:normal;">Filtr:</div>
<div class="t" style="left:308px;top:333px;font-size:11px;color:#000;font-weight:bold;letter-spacing:0.4px">žádný</div>
<div class="r" style="left:348px;top:329px;width:106px;height:19px;background:#fff;border:1px solid #a8a8a8"></div>
<div class="t" style="left:356px;top:333px;font-size:11px;color:#000;font-weight:normal;">Záznam:</div>
<div class="t" style="left:402px;top:333px;font-size:11px;color:#000;font-weight:bold;letter-spacing:0.6px">41</div>
<div class="t" style="left:423px;top:333px;font-size:11px;color:#000;font-weight:normal;">z</div>
<div class="t" style="left:433px;top:333px;font-size:11px;color:#000;font-weight:bold;letter-spacing:0.9px">45</div>
<div class="r" style="left:216px;top:354px;width:731px;height:284px;background:#fff;border:1px solid #a0a0a0"></div>
<div class="r" style="left:217px;top:355px;width:713px;height:18px;background:linear-gradient(#fff 0,#fff 8px,#f1f2f4 8px,#eef0f2)"></div>
<div class="r" style="left:217px;top:372px;width:713px;height:1px;background:#d0d2d6"></div>
<div class="r" style="left:341px;top:356px;width:101px;height:17px;background:linear-gradient(#e6f6fd 0,#e2f4fc 7px,#bfe6f8 7px,#bce4f8);border:1px solid #8ccaf0;border-top:none"></div>
<div class="t" style="left:229px;top:359px;font-size:11px;color:#000;font-weight:normal;">Počet</div>
<div class="t" style="left:341px;top:359px;font-size:11px;color:#000;font-weight:normal;">Kód</div>
<div class="t" style="left:442px;top:359px;font-size:11px;color:#000;font-weight:normal;">Název</div>
<div class="t" style="left:627px;top:359px;font-size:11px;color:#000;font-weight:normal;">Specifikace</div>
<div class="t" style="left:812px;top:359px;font-size:11px;color:#000;font-weight:normal;">PLU</div>
<div class="t" style="left:871px;top:359px;font-size:11px;color:#000;font-weight:normal;">EAN</div>
<svg class="r" style="left:426px;top:361px" width="10" height="5" viewBox="0 0 10 5"><path d="M0 5 L5 0 L10 5Z" fill="#a0a0a0"/></svg>
<div class="r" style="left:612px;top:361px;width:7px;height:7px;background:#a8a8a8"></div>
<div class="r" style="left:797px;top:361px;width:7px;height:7px;background:#a8a8a8"></div>
<div class="r" style="left:855px;top:361px;width:7px;height:7px;background:#a8a8a8"></div>
<div class="r" style="left:914px;top:361px;width:7px;height:7px;background:#a8a8a8"></div>
<div class="r" style="left:930px;top:355px;width:16px;height:282px;background:#eaeaea"></div>
<svg class="r" style="left:934px;top:362px" width="8" height="5" viewBox="0 0 8 5"><path d="M0 4 L4 0 L8 4Z" fill="#505050"/></svg>
<svg class="r" style="left:934px;top:609px" width="8" height="5" viewBox="0 0 8 5"><path d="M0 0 L8 0 L4 4Z" fill="#505050"/></svg>
<div class="r" style="left:931px;top:536px;width:14px;height:48px;background:linear-gradient(90deg,#f4f4f4,#e4e4e4);border:1px solid #979797;border-radius:2px"></div>
<svg class="r" style="left:935px;top:556px" width="6" height="6" viewBox="0 0 6 6"><path d="M0 .5 H6 M0 2.5 H6 M0 4.5 H6" stroke="#555" stroke-width="1"/></svg>
<div class="r" style="left:217px;top:620px;width:729px;height:17px;background:#eaeaea"></div>
<div class="r" style="left:930px;top:620px;width:16px;height:17px;background:#f0f0f0"></div>
<svg class="r" style="left:223px;top:624px" width="5" height="8" viewBox="0 0 5 8"><path d="M4 0 L0 4 L4 8Z" fill="#505050"/></svg>
<svg class="r" style="left:919px;top:624px" width="5" height="8" viewBox="0 0 5 8"><path d="M0 0 L4 4 L0 8Z" fill="#505050"/></svg>
<div class="r" style="left:236px;top:620px;width:15px;height:16px;background:linear-gradient(#f4f4f4,#dcdcdc);border:1px solid #979797;border-radius:2px"></div>
<div class="r" style="left:217px;top:374px;width:12px;height:17px;background:#f1f1f1"></div>
<div class="r" style="left:229px;top:391px;width:701px;height:1px;background:#b6b6b6"></div>
<div class="r" style="left:340px;top:373px;width:1px;height:18px;background:#b6b6b6"></div>
<div class="r" style="left:441px;top:373px;width:1px;height:18px;background:#b6b6b6"></div>
<div class="r" style="left:627px;top:373px;width:1px;height:18px;background:#b6b6b6"></div>
<div class="r" style="left:812px;top:373px;width:1px;height:18px;background:#b6b6b6"></div>
<div class="r" style="left:871px;top:373px;width:1px;height:18px;background:#b6b6b6"></div>
<div class="t" style="right:707px;top:377px;font-size:11px;color:#000;font-weight:normal;text-align:right;">10,000</div>
<div class="t" style="left:297px;top:377px;font-size:11px;color:#000;font-weight:normal;">ks</div>
<div class="t" style="left:343px;top:377px;font-size:11px;color:#000;font-weight:normal;">33</div>
<div class="t" style="left:444px;top:377px;font-size:11px;color:#000;font-weight:normal;">HDD Seagate 80 GB</div>
<div class="t" style="left:630px;top:377px;font-size:11px;color:#000;font-weight:normal;"></div>
<div class="t" style="right:132px;top:377px;font-size:11px;color:#000;font-weight:normal;text-align:right;">63</div>
<div class="r" style="left:217px;top:392px;width:12px;height:17px;background:#f1f1f1"></div>
<div class="r" style="left:229px;top:409px;width:701px;height:1px;background:#b6b6b6"></div>
<div class="r" style="left:340px;top:391px;width:1px;height:18px;background:#b6b6b6"></div>
<div class="r" style="left:441px;top:391px;width:1px;height:18px;background:#b6b6b6"></div>
<div class="r" style="left:627px;top:391px;width:1px;height:18px;background:#b6b6b6"></div>
<div class="r" style="left:812px;top:391px;width:1px;height:18px;background:#b6b6b6"></div>
<div class="r" style="left:871px;top:391px;width:1px;height:18px;background:#b6b6b6"></div>
<div class="t" style="right:707px;top:395px;font-size:11px;color:#000;font-weight:normal;text-align:right;">8,000</div>
<div class="t" style="left:297px;top:395px;font-size:11px;color:#000;font-weight:normal;">ks</div>
<div class="t" style="left:343px;top:395px;font-size:11px;color:#000;font-weight:normal;">34</div>
<div class="t" style="left:444px;top:395px;font-size:11px;color:#000;font-weight:normal;">Case Mini 180W</div>
<div class="t" style="left:630px;top:395px;font-size:11px;color:#000;font-weight:normal;"></div>
<div class="t" style="right:132px;top:395px;font-size:11px;color:#000;font-weight:normal;text-align:right;">64</div>
<div class="r" style="left:217px;top:410px;width:12px;height:17px;background:#f1f1f1"></div>
<div class="r" style="left:229px;top:427px;width:701px;height:1px;background:#b6b6b6"></div>
<div class="r" style="left:340px;top:409px;width:1px;height:18px;background:#b6b6b6"></div>
<div class="r" style="left:441px;top:409px;width:1px;height:18px;background:#b6b6b6"></div>
<div class="r" style="left:627px;top:409px;width:1px;height:18px;background:#b6b6b6"></div>
<div class="r" style="left:812px;top:409px;width:1px;height:18px;background:#b6b6b6"></div>
<div class="r" style="left:871px;top:409px;width:1px;height:18px;background:#b6b6b6"></div>
<div class="t" style="right:707px;top:413px;font-size:11px;color:#000;font-weight:normal;text-align:right;">8,000</div>
<div class="t" style="left:297px;top:413px;font-size:11px;color:#000;font-weight:normal;">ks</div>
<div class="t" style="left:343px;top:413px;font-size:11px;color:#000;font-weight:normal;">35</div>
<div class="t" style="left:444px;top:413px;font-size:11px;color:#000;font-weight:normal;">Klávesnice CZ Mitsumi</div>
<div class="t" style="left:630px;top:413px;font-size:11px;color:#000;font-weight:normal;"></div>
<div class="t" style="right:132px;top:413px;font-size:11px;color:#000;font-weight:normal;text-align:right;">65</div>
<div class="r" style="left:217px;top:428px;width:12px;height:17px;background:#f1f1f1"></div>
<div class="r" style="left:229px;top:445px;width:701px;height:1px;background:#b6b6b6"></div>
<div class="r" style="left:340px;top:427px;width:1px;height:18px;background:#b6b6b6"></div>
<div class="r" style="left:441px;top:427px;width:1px;height:18px;background:#b6b6b6"></div>
<div class="r" style="left:627px;top:427px;width:1px;height:18px;background:#b6b6b6"></div>
<div class="r" style="left:812px;top:427px;width:1px;height:18px;background:#b6b6b6"></div>
<div class="r" style="left:871px;top:427px;width:1px;height:18px;background:#b6b6b6"></div>
<div class="t" style="right:707px;top:431px;font-size:11px;color:#000;font-weight:normal;text-align:right;">10,000</div>
<div class="t" style="left:297px;top:431px;font-size:11px;color:#000;font-weight:normal;">ks</div>
<div class="t" style="left:343px;top:431px;font-size:11px;color:#000;font-weight:normal;">36</div>
<div class="t" style="left:444px;top:431px;font-size:11px;color:#000;font-weight:normal;">Myš Microsoft Intellimouse</div>
<div class="t" style="left:630px;top:431px;font-size:11px;color:#000;font-weight:normal;"></div>
<div class="t" style="right:132px;top:431px;font-size:11px;color:#000;font-weight:normal;text-align:right;">66</div>
<div class="r" style="left:217px;top:446px;width:12px;height:17px;background:#f1f1f1"></div>
<div class="r" style="left:229px;top:463px;width:701px;height:1px;background:#b6b6b6"></div>
<div class="r" style="left:340px;top:445px;width:1px;height:18px;background:#b6b6b6"></div>
<div class="r" style="left:441px;top:445px;width:1px;height:18px;background:#b6b6b6"></div>
<div class="r" style="left:627px;top:445px;width:1px;height:18px;background:#b6b6b6"></div>
<div class="r" style="left:812px;top:445px;width:1px;height:18px;background:#b6b6b6"></div>
<div class="r" style="left:871px;top:445px;width:1px;height:18px;background:#b6b6b6"></div>
<div class="t" style="right:707px;top:449px;font-size:11px;color:#000;font-weight:normal;text-align:right;">0,000</div>
<div class="t" style="left:297px;top:449px;font-size:11px;color:#000;font-weight:normal;">-</div>
<div class="t" style="left:343px;top:449px;font-size:11px;color:#000;font-weight:normal;">37</div>
<div class="t" style="left:444px;top:449px;font-size:11px;color:#000;font-weight:normal;">Počítač PC Start</div>
<div class="t" style="left:630px;top:449px;font-size:11px;color:#000;font-weight:normal;"></div>
<div class="t" style="right:132px;top:449px;font-size:11px;color:#000;font-weight:normal;text-align:right;">0</div>
<div class="r" style="left:217px;top:464px;width:12px;height:17px;background:#f1f1f1"></div>
<div class="r" style="left:229px;top:481px;width:701px;height:1px;background:#b6b6b6"></div>
<div class="r" style="left:340px;top:463px;width:1px;height:18px;background:#b6b6b6"></div>
<div class="r" style="left:441px;top:463px;width:1px;height:18px;background:#b6b6b6"></div>
<div class="r" style="left:627px;top:463px;width:1px;height:18px;background:#b6b6b6"></div>
<div class="r" style="left:812px;top:463px;width:1px;height:18px;background:#b6b6b6"></div>
<div class="r" style="left:871px;top:463px;width:1px;height:18px;background:#b6b6b6"></div>
<div class="t" style="right:707px;top:467px;font-size:11px;color:#000;font-weight:normal;text-align:right;">20,000</div>
<div class="t" style="left:297px;top:467px;font-size:11px;color:#000;font-weight:normal;">ks</div>
<div class="t" style="left:343px;top:467px;font-size:11px;color:#000;font-weight:normal;">38</div>
<div class="t" style="left:444px;top:467px;font-size:11px;color:#000;font-weight:normal;">CD boxy</div>
<div class="t" style="left:630px;top:467px;font-size:11px;color:#000;font-weight:normal;">Přepravní boxy k CD nosičům</div>
<div class="t" style="right:132px;top:467px;font-size:11px;color:#000;font-weight:normal;text-align:right;">0</div>
<div class="r" style="left:217px;top:482px;width:12px;height:17px;background:#f1f1f1"></div>
<div class="r" style="left:229px;top:499px;width:701px;height:1px;background:#b6b6b6"></div>
<div class="r" style="left:340px;top:481px;width:1px;height:18px;background:#b6b6b6"></div>
<div class="r" style="left:441px;top:481px;width:1px;height:18px;background:#b6b6b6"></div>
<div class="r" style="left:627px;top:481px;width:1px;height:18px;background:#b6b6b6"></div>
<div class="r" style="left:812px;top:481px;width:1px;height:18px;background:#b6b6b6"></div>
<div class="r" style="left:871px;top:481px;width:1px;height:18px;background:#b6b6b6"></div>
<div class="t" style="right:707px;top:485px;font-size:11px;color:#000;font-weight:normal;text-align:right;">979,000</div>
<div class="t" style="left:297px;top:485px;font-size:11px;color:#000;font-weight:normal;">ks</div>
<div class="t" style="left:343px;top:485px;font-size:11px;color:#000;font-weight:normal;">39</div>
<div class="t" style="left:444px;top:485px;font-size:11px;color:#000;font-weight:normal;">CD média</div>
<div class="t" style="left:630px;top:485px;font-size:11px;color:#000;font-weight:normal;"></div>
<div class="t" style="right:132px;top:485px;font-size:11px;color:#000;font-weight:normal;text-align:right;">40</div>
<div class="r" style="left:217px;top:500px;width:12px;height:17px;background:#f1f1f1"></div>
<div class="r" style="left:229px;top:517px;width:701px;height:1px;background:#b6b6b6"></div>
<div class="r" style="left:340px;top:499px;width:1px;height:18px;background:#b6b6b6"></div>
<div class="r" style="left:441px;top:499px;width:1px;height:18px;background:#b6b6b6"></div>
<div class="r" style="left:627px;top:499px;width:1px;height:18px;background:#b6b6b6"></div>
<div class="r" style="left:812px;top:499px;width:1px;height:18px;background:#b6b6b6"></div>
<div class="r" style="left:871px;top:499px;width:1px;height:18px;background:#b6b6b6"></div>
<div class="t" style="right:707px;top:503px;font-size:11px;color:#000;font-weight:normal;text-align:right;">10,000</div>
<div class="t" style="left:297px;top:503px;font-size:11px;color:#000;font-weight:normal;">ks</div>
<div class="t" style="left:343px;top:503px;font-size:11px;color:#000;font-weight:normal;">40</div>
<div class="t" style="left:444px;top:503px;font-size:11px;color:#000;font-weight:normal;">CD palety</div>
<div class="t" style="left:630px;top:503px;font-size:11px;color:#000;font-weight:normal;"></div>
<div class="t" style="right:132px;top:503px;font-size:11px;color:#000;font-weight:normal;text-align:right;">0</div>
<div class="r" style="left:229px;top:517px;width:701px;height:18px;background:#3399ff"></div>
<div class="r" style="left:340px;top:518px;width:102px;height:1px;background:repeating-linear-gradient(90deg,#000 0 1px,#f0a030 1px 2px)"></div>
<div class="r" style="left:340px;top:534px;width:102px;height:1px;background:repeating-linear-gradient(90deg,#000 0 1px,#f0a030 1px 2px)"></div>
<div class="r" style="left:340px;top:518px;width:1px;height:17px;background:repeating-linear-gradient(180deg,#000 0 1px,#f0a030 1px 2px)"></div>
<div class="r" style="left:441px;top:518px;width:1px;height:17px;background:repeating-linear-gradient(180deg,#000 0 1px,#f0a030 1px 2px)"></div>
<div class="r" style="left:441px;top:518px;width:187px;height:1px;background:repeating-linear-gradient(90deg,#000 0 1px,#f0a030 1px 2px)"></div>
<div class="r" style="left:441px;top:534px;width:187px;height:1px;background:repeating-linear-gradient(90deg,#000 0 1px,#f0a030 1px 2px)"></div>
<div class="r" style="left:441px;top:518px;width:1px;height:17px;background:repeating-linear-gradient(180deg,#000 0 1px,#f0a030 1px 2px)"></div>
<div class="r" style="left:627px;top:518px;width:1px;height:17px;background:repeating-linear-gradient(180deg,#000 0 1px,#f0a030 1px 2px)"></div>
<div class="r" style="left:627px;top:518px;width:186px;height:1px;background:repeating-linear-gradient(90deg,#000 0 1px,#f0a030 1px 2px)"></div>
<div class="r" style="left:627px;top:534px;width:186px;height:1px;background:repeating-linear-gradient(90deg,#000 0 1px,#f0a030 1px 2px)"></div>
<div class="r" style="left:627px;top:518px;width:1px;height:17px;background:repeating-linear-gradient(180deg,#000 0 1px,#f0a030 1px 2px)"></div>
<div class="r" style="left:812px;top:518px;width:1px;height:17px;background:repeating-linear-gradient(180deg,#000 0 1px,#f0a030 1px 2px)"></div>
<div class="r" style="left:812px;top:518px;width:60px;height:1px;background:repeating-linear-gradient(90deg,#000 0 1px,#f0a030 1px 2px)"></div>
<div class="r" style="left:812px;top:534px;width:60px;height:1px;background:repeating-linear-gradient(90deg,#000 0 1px,#f0a030 1px 2px)"></div>
<div class="r" style="left:812px;top:518px;width:1px;height:17px;background:repeating-linear-gradient(180deg,#000 0 1px,#f0a030 1px 2px)"></div>
<div class="r" style="left:871px;top:518px;width:1px;height:17px;background:repeating-linear-gradient(180deg,#000 0 1px,#f0a030 1px 2px)"></div>
<div class="r" style="left:871px;top:518px;width:60px;height:1px;background:repeating-linear-gradient(90deg,#000 0 1px,#f0a030 1px 2px)"></div>
<div class="r" style="left:871px;top:534px;width:60px;height:1px;background:repeating-linear-gradient(90deg,#000 0 1px,#f0a030 1px 2px)"></div>
<div class="r" style="left:871px;top:518px;width:1px;height:17px;background:repeating-linear-gradient(180deg,#000 0 1px,#f0a030 1px 2px)"></div>
<div class="r" style="left:930px;top:518px;width:1px;height:17px;background:repeating-linear-gradient(180deg,#000 0 1px,#f0a030 1px 2px)"></div>
<svg class="r" style="left:221px;top:521px" width="7" height="11" viewBox="0 0 7 11"><path d="M0 0 L6 5.5 L0 11Z" fill="#000"/></svg>
<div class="r" style="left:229px;top:535px;width:701px;height:1px;background:#b6b6b6"></div>
<div class="t" style="right:707px;top:521px;font-size:11px;color:#fff;font-weight:normal;text-align:right;">500,000</div>
<div class="t" style="left:297px;top:521px;font-size:11px;color:#fff;font-weight:normal;">ks</div>
<div class="t" style="left:343px;top:521px;font-size:11px;color:#fff;font-weight:normal;">41</div>
<div class="t" style="left:444px;top:521px;font-size:11px;color:#fff;font-weight:normal;">DVD-R média</div>
<div class="t" style="left:630px;top:521px;font-size:11px;color:#fff;font-weight:normal;"></div>
<div class="t" style="right:132px;top:521px;font-size:11px;color:#fff;font-weight:normal;text-align:right;">43</div>
<div class="r" style="left:217px;top:536px;width:12px;height:17px;background:#f1f1f1"></div>
<div class="r" style="left:229px;top:553px;width:701px;height:1px;background:#b6b6b6"></div>
<div class="r" style="left:340px;top:535px;width:1px;height:18px;background:#b6b6b6"></div>
<div class="r" style="left:441px;top:535px;width:1px;height:18px;background:#b6b6b6"></div>
<div class="r" style="left:627px;top:535px;width:1px;height:18px;background:#b6b6b6"></div>
<div class="r" style="left:812px;top:535px;width:1px;height:18px;background:#b6b6b6"></div>
<div class="r" style="left:871px;top:535px;width:1px;height:18px;background:#b6b6b6"></div>
<div class="t" style="right:707px;top:539px;font-size:11px;color:#000;font-weight:normal;text-align:right;">99,000</div>
<div class="t" style="left:297px;top:539px;font-size:11px;color:#000;font-weight:normal;">uk</div>
<div class="t" style="left:343px;top:539px;font-size:11px;color:#000;font-weight:normal;">S01</div>
<div class="t" style="left:444px;top:539px;font-size:11px;color:#000;font-weight:normal;">- výměna obrazovky</div>
<div class="t" style="left:630px;top:539px;font-size:11px;color:#000;font-weight:normal;"></div>
<div class="t" style="right:132px;top:539px;font-size:11px;color:#000;font-weight:normal;text-align:right;">0</div>
<div class="r" style="left:217px;top:554px;width:12px;height:17px;background:#f1f1f1"></div>
<div class="r" style="left:229px;top:571px;width:701px;height:1px;background:#b6b6b6"></div>
<div class="r" style="left:340px;top:553px;width:1px;height:18px;background:#b6b6b6"></div>
<div class="r" style="left:441px;top:553px;width:1px;height:18px;background:#b6b6b6"></div>
<div class="r" style="left:627px;top:553px;width:1px;height:18px;background:#b6b6b6"></div>
<div class="r" style="left:812px;top:553px;width:1px;height:18px;background:#b6b6b6"></div>
<div class="r" style="left:871px;top:553px;width:1px;height:18px;background:#b6b6b6"></div>
<div class="t" style="right:707px;top:557px;font-size:11px;color:#000;font-weight:normal;text-align:right;">95,000</div>
<div class="t" style="left:297px;top:557px;font-size:11px;color:#000;font-weight:normal;">hod</div>
<div class="t" style="left:343px;top:557px;font-size:11px;color:#000;font-weight:normal;">S02</div>
<div class="t" style="left:444px;top:557px;font-size:11px;color:#000;font-weight:normal;">- školení externích techniků</div>
<div class="t" style="left:630px;top:557px;font-size:11px;color:#000;font-weight:normal;"></div>
<div class="t" style="right:132px;top:557px;font-size:11px;color:#000;font-weight:normal;text-align:right;">0</div>
<div class="r" style="left:217px;top:572px;width:12px;height:17px;background:#f1f1f1"></div>
<div class="r" style="left:229px;top:589px;width:701px;height:1px;background:#b6b6b6"></div>
<div class="r" style="left:340px;top:571px;width:1px;height:18px;background:#b6b6b6"></div>
<div class="r" style="left:441px;top:571px;width:1px;height:18px;background:#b6b6b6"></div>
<div class="r" style="left:627px;top:571px;width:1px;height:18px;background:#b6b6b6"></div>
<div class="r" style="left:812px;top:571px;width:1px;height:18px;background:#b6b6b6"></div>
<div class="r" style="left:871px;top:571px;width:1px;height:18px;background:#b6b6b6"></div>
<div class="t" style="right:707px;top:575px;font-size:11px;color:#000;font-weight:normal;text-align:right;">99,000</div>
<div class="t" style="left:297px;top:575px;font-size:11px;color:#000;font-weight:normal;">uk</div>
<div class="t" style="left:343px;top:575px;font-size:11px;color:#000;font-weight:normal;">S03</div>
<div class="t" style="left:444px;top:575px;font-size:11px;color:#000;font-weight:normal;">- výměna kanálového voliče</div>
<div class="t" style="left:630px;top:575px;font-size:11px;color:#000;font-weight:normal;"></div>
<div class="t" style="right:132px;top:575px;font-size:11px;color:#000;font-weight:normal;text-align:right;">0</div>
<div class="r" style="left:217px;top:590px;width:12px;height:17px;background:#f1f1f1"></div>
<div class="r" style="left:229px;top:607px;width:701px;height:1px;background:#b6b6b6"></div>
<div class="r" style="left:340px;top:589px;width:1px;height:18px;background:#b6b6b6"></div>
<div class="r" style="left:441px;top:589px;width:1px;height:18px;background:#b6b6b6"></div>
<div class="r" style="left:627px;top:589px;width:1px;height:18px;background:#b6b6b6"></div>
<div class="r" style="left:812px;top:589px;width:1px;height:18px;background:#b6b6b6"></div>
<div class="r" style="left:871px;top:589px;width:1px;height:18px;background:#b6b6b6"></div>
<div class="t" style="right:707px;top:593px;font-size:11px;color:#000;font-weight:normal;text-align:right;">0,000</div>
<div class="t" style="left:297px;top:593px;font-size:11px;color:#000;font-weight:normal;">uk</div>
<div class="t" style="left:343px;top:593px;font-size:11px;color:#000;font-weight:normal;">S04</div>
<div class="t" style="left:444px;top:593px;font-size:11px;color:#000;font-weight:normal;">- instalace SW do Palm</div>
<div class="t" style="left:630px;top:593px;font-size:11px;color:#000;font-weight:normal;"></div>
<div class="t" style="right:132px;top:593px;font-size:11px;color:#000;font-weight:normal;text-align:right;">0</div>
<div class="r" style="left:730px;top:565px;width:2px;height:4px;background:#d4d4d4"></div>
<div class="r" style="left:730px;top:573px;width:2px;height:4px;background:#d4d4d4"></div>
<div class="r" style="left:730px;top:581px;width:2px;height:38px;background:#d4d4d4"></div>
<svg class="r" style="left:714px;top:590px" width="34" height="18" viewBox="714 590 34 18"><path d="M727 592 L716.5 599.5 L727 606 Q723.5 599.5 727 592Z M735 592 L745.5 599.5 L735 606 Q738.5 599.5 735 592Z" fill="none" stroke="#bdbdbd" stroke-width="1"/></svg>
<div class="t" style="left:225px;top:644px;font-size:11px;color:#000;font-weight:normal;">Hledat</div>
<div class="r" style="left:272px;top:641px;width:462px;height:20px;background:#fff;border:1px solid #d8d8d8;border-radius:2px"></div>
<div class="t" style="left:761px;top:644px;font-size:11px;color:#000;font-weight:normal;">Třídění:</div>
<div class="r" style="left:813px;top:641px;width:134px;height:20px;background:#fff;border:1px solid #d8d8d8;border-radius:2px"></div>
<div class="t" style="left:817px;top:645px;font-size:11px;color:#000;font-weight:normal;">Kód</div>
<svg class="r" style="left:933px;top:649px" width="9" height="5" viewBox="0 0 9 5"><path d="M0 0 L9 0 L4.5 4.5Z" fill="#000"/></svg>
<svg class="r" style="left:223px;top:669px" width="22" height="23" viewBox="223 669 22 23"><g shape-rendering="crispEdges"><rect x="224" y="670" width="20" height="20" fill="#000"/><rect x="225" y="670" width="18" height="19" fill="#ecf2ec"/><rect x="224" y="670" width="20" height="2" fill="#8c8c8c"/><rect x="225" y="677" width="13" height="11" fill="#000"/><rect x="225" y="677" width="12" height="10" fill="#eef4ee"/><rect x="225" y="677" width="12" height="3" fill="#1028f0"/><rect x="225" y="678" width="12" height="1" fill="#6a88ff"/></g><path d="M237.5 678.5 L241 675" stroke="#a01030" stroke-width="1.2"/><path d="M238.5 673.5 L242.5 673.5 L242.5 677.5Z" fill="#a01030"/></svg>
<div class="t" style="left:251px;top:675px;font-size:11px;color:#000;font-weight:normal;letter-spacing:-0.45px">Velký číselník</div>
<svg class="r" style="left:328px;top:668px" width="19" height="24" viewBox="328 668 19 24"><rect x="329.5" y="669.5" width="15" height="20" fill="#d4e4f8" stroke="#101820" stroke-width="1.2"/><g fill="#8aa0c0"><rect x="331" y="672" width="12" height="1"/><rect x="331" y="675" width="12" height="1"/><rect x="331" y="678" width="12" height="1"/><rect x="331" y="681" width="12" height="1"/><rect x="331" y="684" width="12" height="1"/><rect x="331" y="687" width="12" height="1"/></g><path d="M333 679 Q333 673 339 673.5" fill="none" stroke="#1a40f0" stroke-width="1.8"/><path d="M338 671 L342 673.5 L338 676Z" fill="#1a40f0"/><path d="M341 680 Q341 686 335 685.5" fill="none" stroke="#1a40f0" stroke-width="1.8"/><path d="M336 683 L332 685.5 L336 688Z" fill="#1a40f0"/></svg>
<div class="t" style="left:350px;top:675px;font-size:11px;color:#000;font-weight:normal;">Občerstvit</div>
<svg class="r" style="left:427px;top:670px" width="16" height="22" viewBox="427 670 16 22"><path d="M428.5 671.5 L437.5 671.5 L441.5 675.5 L441.5 690.5 L428.5 690.5Z" fill="#dce8f8" stroke="#000" stroke-width="1.1"/><path d="M437.5 671.5 L437.5 675.5 L441.5 675.5" fill="#fff" stroke="#000" stroke-width=".8"/></svg>
<div class="t" style="left:450px;top:675px;font-size:11px;color:#000;font-weight:normal;">Nový</div>
<svg class="r" style="left:506px;top:669px" width="26" height="22" viewBox="506 669 26 22"><path d="M508.5 670.5 L517.5 670.5 L521.5 674.5 L521.5 689.5 L508.5 689.5Z" fill="#dce8f8" stroke="#000" stroke-width="1.1"/><path d="M517.5 670.5 L517.5 674.5 L521.5 674.5" fill="#fff" stroke="#000" stroke-width=".8"/><path d="M515 686.5 L516.5 681.5 L527.5 670.5 L530.5 673.5 L519.5 684.5Z" fill="#3a90f8" stroke="#1030a0" stroke-width=".9"/><path d="M517 682 L528 671" stroke="#a8d8ff" stroke-width="1"/><path d="M515 686.5 L516 683.5 L518 685.5Z" fill="#e02040"/></svg>
<div class="t" style="left:534px;top:675px;font-size:11px;color:#000;font-weight:normal;">Opravit</div>
<div class="r" style="left:608px;top:674px;width:13px;height:13px;background:linear-gradient(135deg,#dcdcdc,#fafafa);border:1px solid #8f8f8f;box-shadow:inset 0 0 0 1px #f4f4f4"></div>
<div class="t" style="left:623px;top:675px;font-size:11px;color:#000;font-weight:normal;">Vkládat množství</div>
<div class="r" style="left:716px;top:670px;width:88px;height:22px;background:#f4f4f4;border:1px solid #adb2b5;border-radius:3px"></div>
<div class="t" style="left:660px;width:200px;top:675px;font-size:11px;color:#8d8d8d;font-weight:normal;text-align:center;-webkit-text-stroke:0">Vložit množství</div>
<div class="r" style="left:822px;top:670px;width:57px;height:22px;background:linear-gradient(#e5f4fc,#c4e5f6 50%,#98d1ef 51%,#b1dcf2);border:1px solid #3c7fb1;border-radius:3px;box-shadow:inset 0 0 0 1px #fff"></div>
<div class="t" style="left:750.5px;width:200px;top:675px;font-size:11px;color:#000;font-weight:normal;text-align:center;">OK</div>
<div class="r" style="left:888px;top:670px;width:58px;height:22px;background:linear-gradient(#f2f2f2,#ebebeb 50%,#dddddd 51%,#cfcfcf);border:1px solid #707070;border-radius:3px;box-shadow:inset 0 0 0 1px rgba(255,255,255,.6)"></div>
<div class="t" style="left:817px;width:200px;top:675px;font-size:11px;color:#000;font-weight:normal;text-align:center;">Storno</div>
</body></html>
